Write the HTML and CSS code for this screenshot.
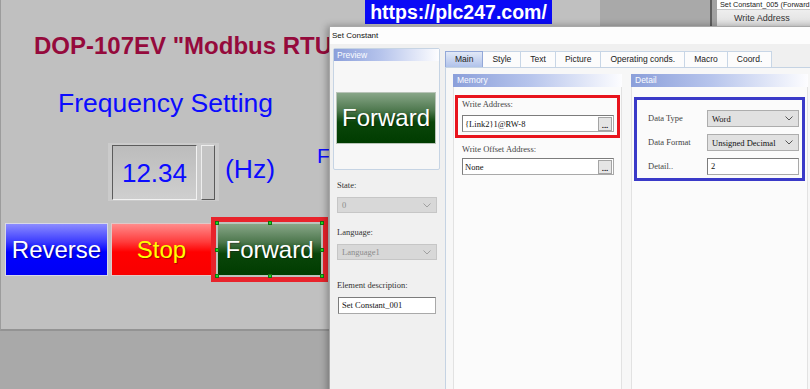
FILE: index.html
```html
<!DOCTYPE html>
<html lang="en">
<head>
  <meta charset="UTF-8">
  <title>DOPSoft - Set Constant</title>
  <link rel="stylesheet" href="styles.css">
</head>
<body>

  <!-- HMI screen being edited (free canvas) -->
  <div class="screen">
    <div class="obj title">DOP-107EV "Modbus RTU"</div>
    <div class="obj freq">Frequency Setting</div>
    <div class="obj numeric">
      <div class="num-field">12.34</div>
      <div class="num-spin"></div>
    </div>
    <div class="obj hz">(Hz)</div>
    <div class="obj fb">F</div>

    <div class="obj btn btn-reverse">Reverse</div>
    <div class="obj btn btn-stop">Stop</div>
    <div class="obj selection">
      <div class="sel-target">
        <div class="btn btn-forward">Forward</div>
        <span class="h t l"></span>
        <span class="h t cx"></span>
        <span class="h t r"></span>
        <span class="h cy l"></span>
        <span class="h cy r"></span>
        <span class="h b l"></span>
        <span class="h b cx"></span>
        <span class="h b r"></span>
      </div>
    </div>
  </div>

  <div class="watermark">https://plc247.com/</div>

  <!-- property list window behind the dialog -->
  <div class="prop-list">
    <div class="prop-panel">
      <div class="prop-title">Set Constant_005 (Forward</div>
      <div class="prop-row">Write Address</div>
    </div>
  </div>

  <!-- Set Constant dialog -->
  <div class="dialog">
    <div class="dialog-title">Set Constant</div>
    <div class="dialog-body">

      <div class="side">
        <div class="preview">
          <div class="group-head">Preview</div>
          <div class="preview-area">
            <div class="btn btn-forward preview-btn">Forward</div>
          </div>
        </div>

        <div class="field-label first">State:</div>
        <div class="select disabled">
          <span>0</span>
          <svg width="8" height="5" viewBox="0 0 8 5"><path d="M0.5 0.5l3.5 3.5 3.5-3.5" fill="none" stroke="#a0a0a0"/></svg>
        </div>

        <div class="field-label">Language:</div>
        <div class="select disabled">
          <span>Language1</span>
          <svg width="8" height="5" viewBox="0 0 8 5"><path d="M0.5 0.5l3.5 3.5 3.5-3.5" fill="none" stroke="#a0a0a0"/></svg>
        </div>

        <div class="field-label desc">Element description:</div>
        <div class="text-input desc-input">Set Constant_001</div>
      </div>

      <div class="tabs-wrap">
        <div class="tabs">
          <div class="tab active">Main</div>
          <div class="tab">Style</div>
          <div class="tab">Text</div>
          <div class="tab">Picture</div>
          <div class="tab">Operating conds.</div>
          <div class="tab">Macro</div>
          <div class="tab">Coord.</div>
        </div>

        <div class="tab-page">
          <!-- Memory group -->
          <div class="group memory">
            <div class="group-head">Memory</div>
            <div class="group-body">
              <div class="mark mark-red">
                <div class="field-label">Write Address:</div>
                <div class="addr-input">
                  <span>{Link2}1@RW-8</span>
                  <span class="dots">...</span>
                </div>
              </div>
              <div class="offset">
                <div class="field-label">Write Offset Address:</div>
                <div class="addr-input">
                  <span>None</span>
                  <span class="dots">...</span>
                </div>
              </div>
            </div>
          </div>

          <!-- Detail group -->
          <div class="group detail">
            <div class="group-head">Detail</div>
            <div class="group-body">
              <div class="mark mark-blue">
                <div class="detail-grid">
                  <div class="field-label">Data Type</div>
                  <div class="select">
                    <span>Word</span>
                    <svg width="8" height="5" viewBox="0 0 8 5"><path d="M0.5 0.5l3.5 3.5 3.5-3.5" fill="none" stroke="#555"/></svg>
                  </div>
                  <div class="field-label">Data Format</div>
                  <div class="select">
                    <span>Unsigned Decimal</span>
                    <svg width="8" height="5" viewBox="0 0 8 5"><path d="M0.5 0.5l3.5 3.5 3.5-3.5" fill="none" stroke="#555"/></svg>
                  </div>
                  <div class="field-label">Detail..</div>
                  <div class="text-input">2</div>
                </div>
              </div>
            </div>
          </div>
        </div>
      </div>

    </div>
  </div>

</body>
</html>
```

FILE: styles.css
```css
* {
  box-sizing: border-box;
}
body {
  margin: 0;
  width: 810px;
  height: 389px;
  position: relative;
  overflow: hidden;
  background: #a9a9a9;
  font-family: "Liberation Sans", Arial, sans-serif;
}

/* ---------- HMI screen ---------- */
.screen {
  position: absolute;
  left: 0;
  top: 0;
  width: 600px;
  height: 331px;
  background: #c0c0c0;
  border-left: 1px solid #9c9c9c;
  border-bottom: 2px solid #939393;
}
.obj {
  position: absolute;
  line-height: 1;
  white-space: nowrap;
}
.title {
  left: 33px;
  top: 34px;
  width: 295px;
  overflow: hidden;
  font-size: 24px;
  font-weight: bold;
  color: #950a3c;
}
.freq {
  left: 57px;
  top: 90px;
  font-size: 26.5px;
  color: #0c0cff;
}
.numeric {
  left: 107px;
  top: 143px;
  width: 111px;
  height: 58px;
  padding: 2px 4px;
  display: flex;
  gap: 4px;
  background: #cbcbcb;
}
.num-field {
  width: 85px;
  height: 55px;
  display: flex;
  align-items: center;
  justify-content: center;
  font-size: 26px;
  color: #0c0cff;
  background: linear-gradient(#bcbcbc, #cfcfcf);
  border-top: 1px solid #5c5c5c;
  border-left: 1px solid #5c5c5c;
  border-right: 1px solid #f2f2f2;
  border-bottom: 1px solid #f2f2f2;
}
.num-spin {
  width: 14px;
  height: 55px;
  background: #c4c4c4;
  border-top: 1px solid #eeeeee;
  border-left: 1px solid #eeeeee;
  border-right: 1px solid #5a5a5a;
  border-bottom: 1px solid #5a5a5a;
}
.hz {
  left: 224px;
  top: 156px;
  font-size: 26.5px;
  color: #0c0cff;
}
.fb {
  left: 316px;
  top: 145px;
  font-size: 21px;
  color: #0c0cff;
}

/* HMI buttons */
.btn {
  display: flex;
  align-items: center;
  justify-content: center;
  font-size: 24px;
  line-height: 1;
  border: 1px solid #d8d8e8;
  text-shadow: 1px 1px 1px rgba(0, 0, 0, 0.35);
}
.btn-reverse {
  left: 4px;
  top: 223px;
  width: 103px;
  height: 53px;
  color: #fff;
  background: linear-gradient(#8c8cff, #3c3cff 35%, #0000ff 55%, #0000f4);
}
.btn-stop {
  left: 110px;
  top: 223px;
  width: 101px;
  height: 53px;
  color: #ffff00;
  border-color: #e0c8c8;
  background: linear-gradient(#ff8c8c, #ff3c3c 35%, #ff0000 55%, #f80000);
}
.btn-forward {
  width: 105px;
  height: 53px;
  color: #fff;
  border-color: #b8c4b8;
  background: linear-gradient(#88a688, #4e784e 35%, #0a460a 58%, #003c00);
}
.selection {
  left: 210px;
  top: 217px;
  width: 117px;
  height: 65px;
  border: 5px solid #e8232b;
  padding: 1px;
}
.sel-target {
  position: relative;
}
.h {
  position: absolute;
  width: 4px;
  height: 4px;
  background: #1ee01e;
  border: 1px solid #147014;
}
.h.t { top: -2px; }
.h.b { bottom: -2px; }
.h.l { left: -2px; }
.h.r { right: -2px; }
.h.cx { left: calc(50% - 2px); }
.h.cy { top: calc(50% - 2px); }

/* watermark */
.watermark {
  position: absolute;
  left: 365px;
  top: 0;
  width: 187px;
  height: 24px;
  background: #0a0af6;
  color: #fff;
  font-size: 19.5px;
  font-weight: bold;
  display: flex;
  align-items: center;
  justify-content: center;
}

/* property list window */
.prop-list {
  position: absolute;
  left: 710px;
  top: 0;
  width: 100px;
  height: 27px;
  border-left: 2px solid #5e5e5e;
  padding-left: 5px;
  background: #a2a2a2;
}
.prop-panel {
  height: 100%;
  background: #fff;
}
.prop-title {
  height: 10px;
  padding-left: 3px;
  font-size: 7.3px;
  line-height: 10px;
  color: #222;
  white-space: nowrap;
  border-bottom: 1px solid #c8c8c8;
}
.prop-row {
  height: 16px;
  padding-left: 17px;
  font-size: 9px;
  line-height: 16px;
  color: #333;
  background: linear-gradient(#eeeeee, #e0e0e0);
}

/* ---------- dialog ---------- */
.dialog {
  position: absolute;
  left: 329px;
  top: 26px;
  width: 500px;
  height: 380px;
  display: flex;
  flex-direction: column;
  background: #f0f0f0;
  border: 1px solid #a8a8a8;
  box-shadow: -2px 0 7px rgba(0, 0, 0, 0.3);
}
.dialog-title {
  height: 17px;
  padding-left: 2px;
  font-size: 8px;
  line-height: 17px;
  color: #111;
  background: #fdfdfd;
}
.dialog-body {
  flex: 1;
  display: flex;
}

.field-label {
  font-family: "Liberation Serif", "Times New Roman", serif;
  font-size: 8.5px;
  line-height: 11px;
  color: #444;
  white-space: nowrap;
}

/* left pane */
.side {
  width: 115px;
  padding: 4px 0 0 3px;
}
.preview {
  width: 107px;
  border: 1px solid #c6d4e4;
  border-radius: 2px;
  background: #f7f7f7;
}
.group-head {
  height: 12px;
  padding-left: 3px;
  font-size: 8.5px;
  line-height: 12px;
  color: #fafcff;
  background: linear-gradient(to right, #8b9fda, #b6c4ec 45%, #fdfdff);
}
.preview-area {
  padding: 31px 2px 25px;
}
.preview-btn {
  width: 100px;
  height: 52px;
}
.side .field-label {
  margin: 14px 0 0 4px;
  color: #333;
}
.side .field-label.first {
  margin-top: 10px;
}
.side .field-label.desc {
  margin-top: 20px;
}
.select {
  height: 17px;
  display: flex;
  align-items: center;
  justify-content: space-between;
  padding: 0 5px 0 4px;
  font-family: "Liberation Serif", "Times New Roman", serif;
  font-size: 8.5px;
  color: #111;
  background: #e1e1e1;
  border: 1px solid #adadad;
  white-space: nowrap;
}
.side .select {
  width: 100px;
  height: 16px;
  margin: 6px 0 0 4px;
  color: #8c8c8c;
  background: #d8d8d8;
  border-color: #c6c6c6;
}
.text-input {
  height: 17px;
  padding-left: 3px;
  font-family: "Liberation Serif", "Times New Roman", serif;
  font-size: 8.5px;
  line-height: 15px;
  color: #111;
  background: #fff;
  border: 1px solid #a9a9a9;
  border-top-color: #7c7c7c;
  border-left-color: #7c7c7c;
}
.desc-input {
  width: 98px;
  margin: 6px 0 0 5px;
}

/* tabs */
.tabs-wrap {
  flex: 1;
  display: flex;
  flex-direction: column;
  padding-top: 7px;
}
.tabs {
  display: flex;
  height: 16px;
}
.tab {
  padding: 0 9px;
  font-size: 8.5px;
  line-height: 14px;
  color: #222;
  background: #fcfcfc;
  border: 1px solid #c8d6e6;
  border-left: none;
  border-bottom: none;
  white-space: nowrap;
}
.tab.active {
  border-left: 1px solid #93a8d8;
  border-color: #93a8d8;
  background: linear-gradient(#e2e9f7, #b0c2ea);
}
.tab-page {
  flex: 1;
  display: flex;
  gap: 9px;
  padding: 6px 0 0 7px;
  background: #f7f7f7;
  border: 1px solid #c5d3e3;
}
.group {
  display: flex;
  flex-direction: column;
}
.group.memory {
  width: 169px;
}
.group.detail {
  width: 177px;
}
.group .group-head {
  height: 13px;
  line-height: 13px;
  padding-left: 4px;
}
.group-body {
  flex: 1;
  background: #fbfbfb;
  border-left: 1px solid #e2e2e2;
  border-right: 1px solid #e2e2e2;
}

.mark-red {
  margin: 8px 1px 0;
  padding: 1px 3px 3px 4px;
  border: 3px solid #e8141d;
}
.mark-red .field-label {
  margin-bottom: 5px;
}
.addr-input {
  height: 17px;
  display: flex;
  align-items: center;
  justify-content: space-between;
  padding: 0 1px 0 2px;
  font-family: "Liberation Serif", "Times New Roman", serif;
  font-size: 8.5px;
  color: #111;
  background: #fff;
  border: 1px solid #a9a9a9;
  border-top-color: #7c7c7c;
  border-left-color: #7c7c7c;
}
.dots {
  width: 14px;
  height: 14px;
  font-family: "Liberation Sans", Arial, sans-serif;
  font-size: 8px;
  font-weight: bold;
  line-height: 15px;
  text-align: center;
  background: #e5e5e5;
  border: 1px solid #a4a4a4;
}
.offset {
  padding: 6px 7px 0 8px;
}
.offset .field-label {
  margin-bottom: 3px;
}

.mark-blue {
  margin: 10px 2px 0;
  padding: 10px 3px 3px 11px;
  border: 3px solid #3a3ac8;
}
.detail-grid {
  display: grid;
  grid-template-columns: 59px 92px;
  grid-auto-rows: 17px;
  row-gap: 7px;
  align-items: center;
}
```
